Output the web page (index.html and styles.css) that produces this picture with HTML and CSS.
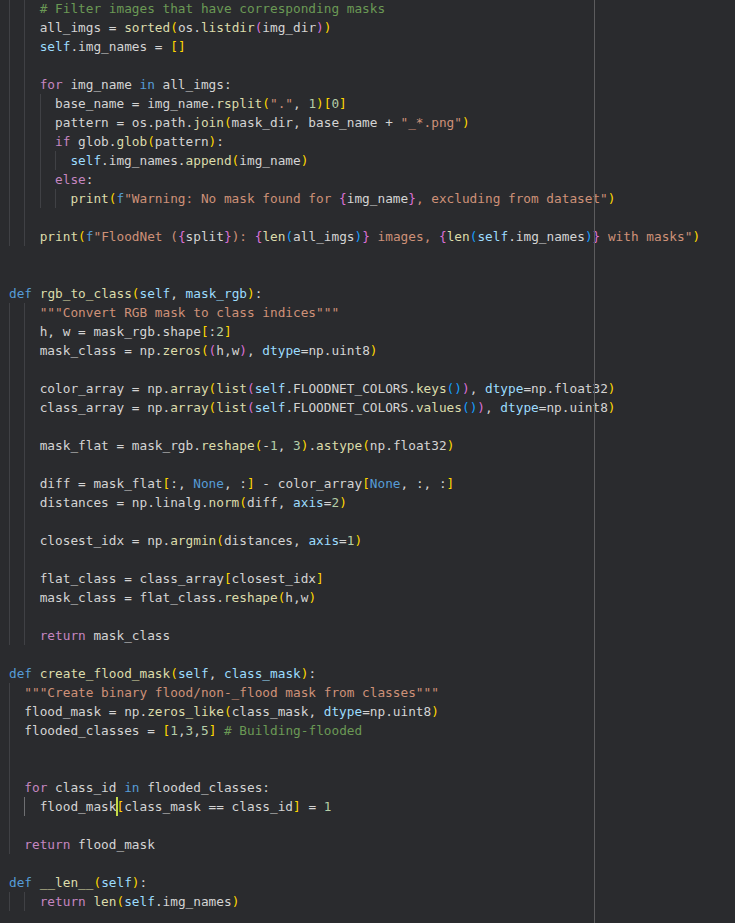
FILE: index.html
```html
<!DOCTYPE html>
<html>
<head>
<meta charset="utf-8">
<link rel="stylesheet" href="styles.css">
</head>
<body>
<div class="editor">
<div class="ruler"></div>
<div class="code">
<div class="ln"><i class="g"></i><i class="g"></i><span class="c"># Filter images that have corresponding masks</span></div>
<div class="ln"><i class="g"></i><i class="g"></i>all_imgs = <span class="f">sorted</span><span class="y">(</span>os.<span class="f">listdir</span><span class="m">(</span>img_dir<span class="m">)</span><span class="y">)</span></div>
<div class="ln"><i class="g"></i><i class="g"></i><span class="p">self</span>.img_names = <span class="y">[]</span></div>
<div class="ln"><i class="g"></i><i class="g"></i></div>
<div class="ln"><i class="g"></i><i class="g"></i><span class="k">for</span> img_name <span class="d">in</span> all_imgs:</div>
<div class="ln"><i class="g"></i><i class="g"></i><i class="g"></i>base_name = img_name.<span class="f">rsplit</span><span class="y">(</span><span class="s">"."</span>, <span class="n">1</span><span class="y">)[</span><span class="n">0</span><span class="y">]</span></div>
<div class="ln"><i class="g"></i><i class="g"></i><i class="g"></i>pattern = os.path.<span class="f">join</span><span class="y">(</span>mask_dir, base_name + <span class="s">"_*.png"</span><span class="y">)</span></div>
<div class="ln"><i class="g"></i><i class="g"></i><i class="g"></i><span class="k">if</span> glob.<span class="f">glob</span><span class="y">(</span>pattern<span class="y">)</span>:</div>
<div class="ln"><i class="g"></i><i class="g"></i><i class="g"></i><i class="g"></i><span class="p">self</span>.img_names.<span class="f">append</span><span class="y">(</span>img_name<span class="y">)</span></div>
<div class="ln"><i class="g"></i><i class="g"></i><i class="g"></i><span class="k">else</span>:</div>
<div class="ln"><i class="g"></i><i class="g"></i><i class="g"></i><i class="g"></i><span class="f">print</span><span class="y">(</span><span class="d">f</span><span class="s">"Warning: No mask found for </span><span class="m">{</span>img_name<span class="m">}</span><span class="s">, excluding from dataset"</span><span class="y">)</span></div>
<div class="ln"><i class="g"></i><i class="g"></i></div>
<div class="ln"><i class="g"></i><i class="g"></i><span class="f">print</span><span class="y">(</span><span class="d">f</span><span class="s">"FloodNet (</span><span class="m">{</span>split<span class="m">}</span><span class="s">): </span><span class="m">{</span><span class="f">len</span><span class="u">(</span>all_imgs<span class="u">)</span><span class="m">}</span><span class="s"> images, </span><span class="m">{</span><span class="f">len</span><span class="u">(</span><span class="p">self</span>.img_names<span class="u">)</span><span class="m">}</span><span class="s"> with masks"</span><span class="y">)</span></div>
<div class="ln"></div>
<div class="ln"></div>
<div class="ln"><span class="d">def</span> <span class="f">rgb_to_class</span><span class="y">(</span><span class="p">self</span>, <span class="p">mask_rgb</span><span class="y">)</span>:</div>
<div class="ln"><i class="g"></i><i class="g"></i><span class="s">"""Convert RGB mask to class indices"""</span></div>
<div class="ln"><i class="g"></i><i class="g"></i>h, w = mask_rgb.shape<span class="y">[</span>:<span class="n">2</span><span class="y">]</span></div>
<div class="ln"><i class="g"></i><i class="g"></i>mask_class = np.<span class="f">zeros</span><span class="y">(</span><span class="m">(</span>h,w<span class="m">)</span>, <span class="p">dtype</span>=np.uint8<span class="y">)</span></div>
<div class="ln"><i class="g"></i><i class="g"></i></div>
<div class="ln"><i class="g"></i><i class="g"></i>color_array = np.<span class="f">array</span><span class="y">(</span><span class="f">list</span><span class="m">(</span><span class="p">self</span>.FLOODNET_COLORS.<span class="f">keys</span><span class="u">()</span><span class="m">)</span>, <span class="p">dtype</span>=np.float32<span class="y">)</span></div>
<div class="ln"><i class="g"></i><i class="g"></i>class_array = np.<span class="f">array</span><span class="y">(</span><span class="f">list</span><span class="m">(</span><span class="p">self</span>.FLOODNET_COLORS.<span class="f">values</span><span class="u">()</span><span class="m">)</span>, <span class="p">dtype</span>=np.uint8<span class="y">)</span></div>
<div class="ln"><i class="g"></i><i class="g"></i></div>
<div class="ln"><i class="g"></i><i class="g"></i>mask_flat = mask_rgb.<span class="f">reshape</span><span class="y">(</span>-<span class="n">1</span>, <span class="n">3</span><span class="y">)</span>.<span class="f">astype</span><span class="y">(</span>np.float32<span class="y">)</span></div>
<div class="ln"><i class="g"></i><i class="g"></i></div>
<div class="ln"><i class="g"></i><i class="g"></i>diff = mask_flat<span class="y">[</span>:, <span class="d">None</span>, :<span class="y">]</span> - color_array<span class="y">[</span><span class="d">None</span>, :, :<span class="y">]</span></div>
<div class="ln"><i class="g"></i><i class="g"></i>distances = np.linalg.<span class="f">norm</span><span class="y">(</span>diff, <span class="p">axis</span>=<span class="n">2</span><span class="y">)</span></div>
<div class="ln"><i class="g"></i><i class="g"></i></div>
<div class="ln"><i class="g"></i><i class="g"></i>closest_idx = np.<span class="f">argmin</span><span class="y">(</span>distances, <span class="p">axis</span>=<span class="n">1</span><span class="y">)</span></div>
<div class="ln"><i class="g"></i><i class="g"></i></div>
<div class="ln"><i class="g"></i><i class="g"></i>flat_class = class_array<span class="y">[</span>closest_idx<span class="y">]</span></div>
<div class="ln"><i class="g"></i><i class="g"></i>mask_class = flat_class.<span class="f">reshape</span><span class="y">(</span>h,w<span class="y">)</span></div>
<div class="ln"><i class="g"></i><i class="g"></i></div>
<div class="ln"><i class="g"></i><i class="g"></i><span class="k">return</span> mask_class</div>
<div class="ln"></div>
<div class="ln"><span class="d">def</span> <span class="f">create_flood_mask</span><span class="y">(</span><span class="p">self</span>, <span class="p">class_mask</span><span class="y">)</span>:</div>
<div class="ln"><i class="g"></i><span class="s">"""Create binary flood/non-_flood mask from classes"""</span></div>
<div class="ln"><i class="g"></i>flood_mask = np.<span class="f">zeros_like</span><span class="y">(</span>class_mask, <span class="p">dtype</span>=np.uint8<span class="y">)</span></div>
<div class="ln"><i class="g"></i>flooded_classes = <span class="y">[</span><span class="n">1</span>,<span class="n">3</span>,<span class="n">5</span><span class="y">]</span> <span class="c"># Building-flooded</span></div>
<div class="ln"><i class="g"></i></div>
<div class="ln"><i class="g"></i></div>
<div class="ln"><i class="g"></i><span class="k">for</span> class_id <span class="d">in</span> flooded_classes:</div>
<div class="ln"><i class="g"></i><i class="g ga"></i>flood_mask<span class="cur"></span><span class="y">[</span>class_mask == class_id<span class="y">]</span> = <span class="n">1</span></div>
<div class="ln"><i class="g"></i></div>
<div class="ln"><i class="g"></i><span class="k">return</span> flood_mask</div>
<div class="ln"></div>
<div class="ln"><span class="d">def</span> <span class="f">__len__</span><span class="y">(</span><span class="p">self</span><span class="y">)</span>:</div>
<div class="ln"><i class="g"></i><i class="g"></i><span class="k">return</span> <span class="f">len</span><span class="y">(</span><span class="p">self</span>.img_names<span class="y">)</span></div>
<div class="ln"></div>
</div>
</div>
</body>
</html>
```
FILE: styles.css
```css
html, body {
  margin: 0;
  padding: 0;
  background: #2a2b2e;
}
.editor {
  position: relative;
  height: 923px;
  overflow: hidden;
  padding-left: 9px;
  font-family: "DejaVu Sans Mono", "Liberation Mono", monospace;
  font-size: 12.75px;
  color: #d4d4d4;
}
.ruler {
  position: absolute;
  left: 594px;
  top: 0;
  bottom: 0;
  width: 1px;
  background: #5c5c5e;
}
.code {
  margin-top: -1px;
}
.ln {
  height: 19px;
  line-height: 19px;
  white-space: pre;
}
.g {
  display: inline-block;
  width: 2ch;
  height: 19px;
  vertical-align: top;
  box-sizing: border-box;
  border-left: 1px solid #404145;
}
.ga {
  border-left-color: #6e6f72;
}
.k { color: #c586c0; }
.d { color: #569cd6; }
.s { color: #ce9178; }
.c { color: #6a9955; }
.n { color: #b5cea8; }
.f { color: #dcdcaa; }
.p { color: #9cdcfe; }
.y { color: #ffd700; }
.m { color: #da70d6; }
.u { color: #179fff; }
.cur {
  display: inline-block;
  width: 2px;
  height: 19px;
  margin-right: -2px;
  vertical-align: top;
  background: #c4d94a;
}
```
